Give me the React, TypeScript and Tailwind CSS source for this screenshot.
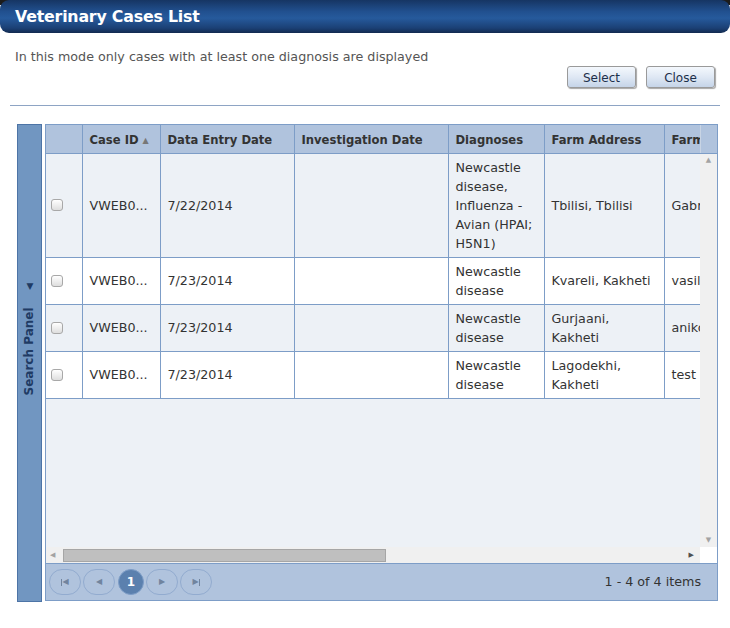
import React from 'react';

const COLS = [36, 78, 134, 154, 96, 120, 120];

const ROWS = [
  { id: 'VWEB0...', date: '7/22/2014', diag: ['Newcastle', 'disease,', 'Influenza -', 'Avian (HPAI;', 'H5N1)'], addr: ['Tbilisi, Tbilisi'], farm: 'Gabriel', alt: true, h: 'h-[103px]' },
  { id: 'VWEB0...', date: '7/23/2014', diag: ['Newcastle', 'disease'], addr: ['Kvareli, Kakheti'], farm: 'vasili', alt: false, h: 'h-[47px]' },
  { id: 'VWEB0...', date: '7/23/2014', diag: ['Newcastle', 'disease'], addr: ['Gurjaani,', 'Kakheti'], farm: 'aniko', alt: true, h: 'h-[47px]' },
  { id: 'VWEB0...', date: '7/23/2014', diag: ['Newcastle', 'disease'], addr: ['Lagodekhi,', 'Kakheti'], farm: 'test', alt: false, h: 'h-[47px]' },
];

const Cols = () => (
  <colgroup>
    {COLS.map((w, i) => (
      <col key={i} style={{ width: w }} />
    ))}
  </colgroup>
);

const Checkbox = () => (
  <div className="w-[12px] h-[12px] rounded-[3px] border border-[#a8a8a8] bg-gradient-to-b from-white to-[#dedede]" />
);

const PagerBtn = ({ children }: { children: React.ReactNode }) => (
  <div className="w-[32px] h-[26px] rounded-full border border-[#92abcf] flex items-center justify-center text-[#71849e]">
    {children}
  </div>
);

const App: React.FC = () => {
  return (
    <div className="w-[730px] h-[628px] bg-white relative overflow-hidden font-['DejaVu_Sans',Verdana,sans-serif] text-[12.7px] text-[#333]">
      {/* Title bar */}
      <div className="h-[33px] bg-[linear-gradient(#1c1c1c_0,#1c1c1c_5px,#fff_5px)]">
        <div className="h-[33px] rounded-[9px] bg-[linear-gradient(#163563_0%,#21508f_35%,#265a9c_55%,#1b4075_85%,#122a50_100%)] flex items-center pl-[15px]">
          <span className="text-white font-bold text-[15.8px] tracking-[-0.2px]">Veterinary Cases List</span>
        </div>
      </div>

      {/* Info */}
      <p className="pl-[15px] mt-[16px] text-[#555] leading-[15px]">In this mode only cases with at least one diagnosis are displayed</p>
      <div className="flex justify-end gap-[10px] pr-[15px] mt-[2px]">
        {['Select', 'Close'].map((t) => (
          <button
            key={t}
            className="w-[69px] h-[22px] pt-[1px] rounded-[3px] border border-[#9a9a9a] bg-gradient-to-b from-[#f4f8fd] via-[#dfe8f4] to-[#c5d4e8] shadow-[1px_1px_1px_rgba(0,0,0,0.35)] text-[#1c2f4a] text-[12px]"
          >
            {t}
          </button>
        ))}
      </div>
      <div className="mx-[10px] mt-[17px] h-px bg-[#8ea4c4]" />

      {/* Main */}
      <div className="flex gap-[3px] pl-[17px] mt-[18px]">
        <div className="w-[25px] h-[478px] bg-[#7196c1] border border-[#4d74a6] flex flex-col items-center justify-center">
          <div className="-rotate-90 whitespace-nowrap flex items-center gap-[18px] text-[#1f3b64] font-bold text-[12px] translate-y-[-24px]">
            <span>Search Panel</span>
            <span className="rotate-90 text-[9px] leading-none">▼</span>
          </div>
        </div>

        <div className="w-[673px] h-[477px] border border-[#7d9dc7] flex flex-col">
          {/* header */}
          <div className="h-[29px] bg-[#b0c3dd] border-b border-[#7d9dc7] overflow-hidden relative">
            <table className="table-fixed border-collapse w-[738px] font-bold text-[#333] text-[11.6px]">
              <Cols />
              <tbody>
                <tr className="h-[28px]">
                  <td className="border-r border-[#7d9dc7]" />
                  <td className="border-r border-[#7d9dc7] pl-[7px] pt-[4px]">
                    Case ID <span className="text-[8px] text-[#777] align-[1px]">▲</span>
                  </td>
                  <td className="border-r border-[#7d9dc7] pl-[7px] pt-[4px]">Data Entry Date</td>
                  <td className="border-r border-[#7d9dc7] pl-[7px] pt-[4px]">Investigation Date</td>
                  <td className="border-r border-[#7d9dc7] pl-[7px] pt-[4px]">Diagnoses</td>
                  <td className="border-r border-[#7d9dc7] pl-[7px] pt-[4px]">Farm Address</td>
                  <td className="pl-[7px] pt-[4px]">Farm Owner</td>
                </tr>
              </tbody>
            </table>
            <div className="absolute right-0 top-0 w-[17px] h-full bg-[#b0c3dd] border-l border-[#c8d4e4]" />
          </div>

          {/* body */}
          <div className="flex h-[393px]">
            <div className="flex-1 overflow-hidden bg-[#edf1f6]">
              <table className="table-fixed border-collapse w-[738px] leading-[19px]">
                <Cols />
                <tbody>
                  {ROWS.map((r, i) => (
                    <tr key={i} className={`${r.h} ${r.alt ? 'bg-[#edf1f6]' : 'bg-white'} border-b border-[#7d9dc7]`}>
                      <td className="border-r border-[#7d9dc7] pl-[5px]">
                        <Checkbox />
                      </td>
                      <td className="border-r border-[#7d9dc7] pl-[7px] whitespace-nowrap">{r.id}</td>
                      <td className="border-r border-[#7d9dc7] pl-[7px]">{r.date}</td>
                      <td className="border-r border-[#7d9dc7]" />
                      <td className="border-r border-[#7d9dc7] pl-[7px]">
                        {r.diag.map((l, j) => (
                          <div key={j}>{l}</div>
                        ))}
                      </td>
                      <td className="border-r border-[#7d9dc7] pl-[7px]">
                        {r.addr.map((l, j) => (
                          <div key={j}>{l}</div>
                        ))}
                      </td>
                      <td className="pl-[7px] whitespace-nowrap">{r.farm}</td>
                    </tr>
                  ))}
                </tbody>
              </table>
            </div>
            <div className="w-[17px] bg-[#f0f0f0] flex flex-col items-center justify-between py-[3px] text-[#a3a3a3] text-[7px] leading-none">
              <span>▲</span>
              <span>▼</span>
            </div>
          </div>

          {/* horizontal scrollbar */}
          <div className="flex h-[17px] border-b border-[#7d9dc7]">
            <div className="flex-1 bg-[#f0f0f0] flex items-center pl-[4px] pr-[6px] text-[7px] leading-none">
              <span className="text-[#a3a3a3] w-[13px]">◀</span>
              <div className="w-[323px] h-[13px] bg-[#bfbfbf] border border-[#a6a6a6]" />
              <div className="flex-1" />
              <span className="text-[#505050]">▶</span>
            </div>
            <div className="w-[17px] bg-white" />
          </div>

          {/* pager */}
          <div className="flex-1 bg-[#b0c3dd] flex items-center justify-between pl-[3px] pr-[16px]">
            <div className="flex items-center gap-[2px] text-[8px] leading-none">
              <PagerBtn>
                <span className="flex items-center"><span className="w-[1px] h-[7px] bg-[#71849e]" />◀</span>
              </PagerBtn>
              <PagerBtn>◀</PagerBtn>
              <div className="w-[26px] h-[26px] ml-[1px] rounded-full bg-[#5b80ae] border border-[#7d9dc7] flex items-center justify-center text-white text-[12px] font-bold">
                1
              </div>
              <PagerBtn>▶</PagerBtn>
              <PagerBtn>
                <span className="flex items-center">▶<span className="w-[1px] h-[7px] bg-[#71849e]" /></span>
              </PagerBtn>
            </div>
            <span className="text-[#333]">1 - 4 of 4 items</span>
          </div>
        </div>
      </div>
    </div>
  );
};

export default App;
